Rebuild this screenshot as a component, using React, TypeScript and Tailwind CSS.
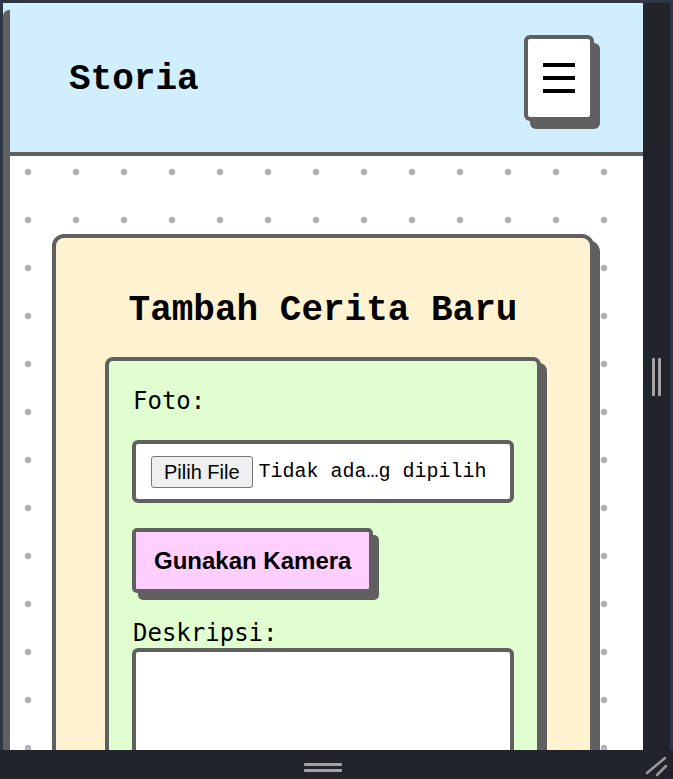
const mono = "font-['Liberation_Mono','Courier_New',monospace]";
const labelMono = "font-['DejaVu_Sans_Mono',monospace]";
const sans = "font-['Liberation_Sans',Arial,sans-serif]";

function Hamburger() {
  return (
    <button
      aria-label="Menu"
      className="flex h-[86px] w-[70px] flex-col items-center justify-center gap-[9px] rounded-[6px] border-4 border-[#606060] bg-white shadow-[6px_8px_0_#606060]"
    >
      <span className="block h-[4px] w-[32px] bg-black" />
      <span className="block h-[4px] w-[32px] bg-black" />
      <span className="block h-[4px] w-[32px] bg-black" />
    </button>
  );
}

function StoryForm() {
  return (
    <form className="mx-auto w-[436px] rounded-[8px] border-4 border-[#606060] bg-[#e0fed0] px-[23px] pb-[30px] pt-[22px] shadow-[6px_6px_0_#606060]">
      <label className={`block pl-px text-[24px] leading-[36px] text-black ${labelMono}`}>Foto:</label>

      <div className="mt-[21px] flex h-[63px] items-center gap-[6px] rounded-[6px] border-4 border-[#606060] bg-white px-[15px]">
        <span
          className={`flex h-[32px] items-center rounded-[3px] border border-[#767676] bg-[#efefef] px-[12px] text-[20px] text-black ${sans}`}
        >
          Pilih File
        </span>
        <span className={`text-[20px] text-black ${mono}`}>Tidak ada…g dipilih</span>
      </div>

      <button
        type="button"
        className={`mt-[25px] flex h-[65px] items-center rounded-[5px] border-4 border-[#606060] bg-[#ffd0ff] px-[18px] text-[24px] font-bold text-black shadow-[6px_7px_0_#606060] ${sans}`}
      >
        Gunakan Kamera
      </button>

      <label className={`mt-[22px] block pl-px text-[24px] leading-[36px] text-black ${labelMono}`}>
        Deskripsi:
      </label>
      <textarea className="-mt-[3px] block h-[150px] w-full resize-none rounded-[6px] border-4 border-[#606060] bg-white" />
    </form>
  );
}

function Page() {
  return (
    <div className="flex h-full w-full bg-[#d0eefe]">
      <div className="w-[7px] shrink-0 pt-[7px]">
        <div className="h-full rounded-tl-[6px] bg-[#606060]" />
      </div>
      <div className="flex w-[633px] shrink-0 flex-col">
        <header className="flex h-[153px] shrink-0 items-center justify-between border-b-4 border-[#606060] pl-[59px] pr-[49px]">
          <h1 className={`mt-[5px] text-[36px] font-bold text-black ${mono}`}>Storia</h1>
          <Hamburger />
        </header>
        <main
          className="flex-1 bg-white pl-[42px] pt-[78px]"
          style={{
            backgroundImage: "radial-gradient(circle, #b3b3b3 3px, transparent 3.6px)",
            backgroundSize: "48px 48px",
            backgroundPosition: "-6px -8px",
          }}
        >
          <section className="w-[542px] rounded-[12px] border-4 border-[#606060] bg-[#fff2d1] pb-[40px] pt-[51px] shadow-[6px_6px_0_#606060]">
            <h2 className={`mb-[25px] text-center text-[36px] font-bold leading-[43px] text-black ${mono}`}>
              Tambah Cerita Baru
            </h2>
            <StoryForm />
          </section>
        </main>
      </div>
    </div>
  );
}

export default function App() {
  return (
    <div className="flex h-[779px] w-[673px] flex-col overflow-hidden bg-[#21252b]">
      <div className="h-[3px] shrink-0 bg-[#2f3644]" />
      <div className="flex h-[747px] shrink-0">
        <div className="w-[3px] shrink-0 bg-[#2f3644]" />
        <div className="h-[747px] w-[640px] shrink-0 overflow-hidden">
          <Page />
        </div>
        <div className="flex w-[27px] shrink-0 items-center pl-[9px]">
          <div className="flex gap-[3px]">
            <span className="block h-[38px] w-[3px] rounded-[1px] bg-[#a3a3a3]" />
            <span className="block h-[38px] w-[3px] rounded-[1px] bg-[#a3a3a3]" />
          </div>
        </div>
        <div className="w-[3px] shrink-0 bg-[#2f3644]" />
      </div>
      <div className="flex h-[29px] shrink-0">
        <div className="flex w-[643px] flex-col items-center gap-[3px] pl-[3px] pt-[13px]">
          <span className="block h-[3px] w-[38px] rounded-[1px] bg-[#a3a3a3]" />
          <span className="block h-[3px] w-[38px] rounded-[1px] bg-[#a3a3a3]" />
        </div>
        <div className="w-[30px]">
          <svg width="30" height="29" viewBox="0 0 30 29">
            <line x1="4" y1="23" x2="22" y2="8" stroke="#9a9a9a" strokeWidth="2.5" strokeLinecap="round" />
            <line x1="14" y1="25" x2="23" y2="16" stroke="#9a9a9a" strokeWidth="2.5" strokeLinecap="round" />
          </svg>
        </div>
      </div>
    </div>
  );
}
